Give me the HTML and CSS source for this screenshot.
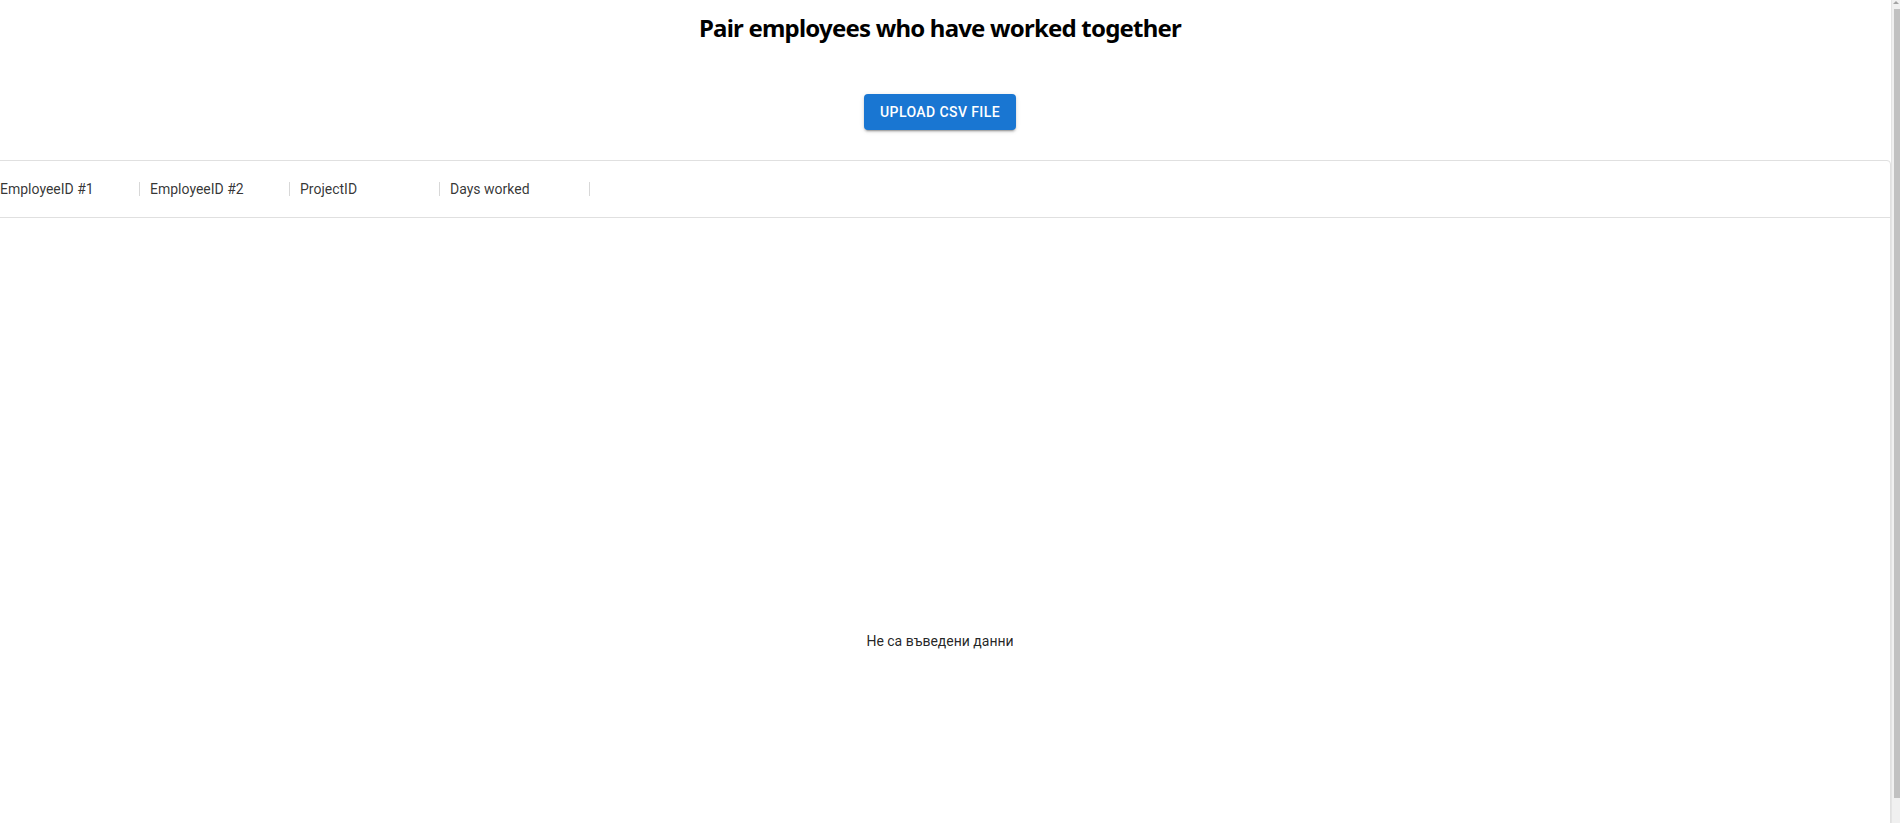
FILE: index.html
```html
<!DOCTYPE html>
<html lang="en">
<head>
<meta charset="utf-8">
<title>Pair employees</title>
<link rel="stylesheet" href="styles.css">
</head>
<body>
<div class="window">
  <div class="viewport">
    <div class="app">
      <h1 class="title">Pair employees who have worked together</h1>
      <div class="actions">
        <button class="upload" type="button">Upload CSV file</button>
      </div>
      <div class="grid">
        <div class="grid-header">
          <div class="col"><span class="col-title">EmployeeID #1</span><i class="sep"></i></div>
          <div class="col"><span class="col-title">EmployeeID #2</span><i class="sep"></i></div>
          <div class="col"><span class="col-title">ProjectID</span><i class="sep"></i></div>
          <div class="col"><span class="col-title">Days worked</span><i class="sep"></i></div>
        </div>
        <div class="grid-body">
          <span class="no-rows">Не са въведени данни</span>
        </div>
      </div>
    </div>
  </div>
  <div class="scrollbar">
    <div class="sb-arrow"><i class="sb-tri"></i></div>
    <div class="sb-thumb"></div>
    <div class="sb-rest"></div>
  </div>
</div>
</body>
</html>
```

FILE: styles.css
```css
html, body {
  margin: 0;
  padding: 0;
  background: #fff;
}

.window {
  display: flex;
  height: 100vh;
  overflow: hidden;
}

.viewport {
  flex: 1;
  min-width: 0;
  overflow: hidden;
}

.scrollbar {
  width: 9px;
  display: flex;
  flex-direction: column;
  background: #f0f0f0;
  border-left: 1px solid #e4e4e4;
  box-sizing: border-box;
}

.sb-arrow {
  height: 9px;
  display: flex;
  justify-content: flex-end;
  align-items: flex-start;
}

.sb-tri {
  width: 0;
  height: 0;
  margin: 1px 1px 0 0;
  border-left: 3px solid transparent;
  border-right: 3px solid transparent;
  border-bottom: 3px solid #a3a3a3;
}

.sb-thumb {
  height: 789px;
  margin-left: 2px;
  background: #c1c1c1;
}

.sb-rest {
  flex: 1;
}

.app {
  margin-left: -11px;
  font-family: Roboto, "Noto Sans", sans-serif;
}

.title {
  margin: 0;
  padding-top: 10px;
  height: 36px;
  line-height: 36px;
  text-align: center;
  font-family: "Noto Sans", "Open Sans", sans-serif;
  font-weight: 700;
  font-size: 24px;
  letter-spacing: -0.8px;
  color: #000;
}

.actions {
  display: flex;
  justify-content: center;
  padding: 48px 0 30px;
}

.upload {
  height: 36px;
  padding: 0 16px;
  border: 0;
  border-radius: 4px;
  background: #1976d2;
  color: #fff;
  font-family: Roboto, sans-serif;
  font-weight: 500;
  font-size: 14px;
  letter-spacing: 0.4px;
  text-transform: uppercase;
  box-shadow: 0 3px 1px -2px rgba(0,0,0,0.2), 0 2px 2px 0 rgba(0,0,0,0.14), 0 1px 5px 0 rgba(0,0,0,0.12);
  cursor: pointer;
}

.grid {
  border: 1px solid #e0e0e0;
  border-radius: 4px;
  color: rgba(0,0,0,0.87);
  font-size: 14px;
}

.grid-header {
  display: flex;
  height: 56px;
  border-bottom: 1px solid #e0e0e0;
}

.col {
  width: 150px;
  box-sizing: border-box;
  padding-left: 10px;
  display: flex;
  align-items: center;
}

.col-title {
  flex: 1;
  font-weight: 400;
  white-space: nowrap;
  color: rgba(0,0,0,0.8);
}

.sep {
  width: 1px;
  height: 14px;
  background: #d8d8d8;
}

.grid-body {
  height: 629px;
  box-sizing: border-box;
  padding-top: 413px;
  text-align: center;
  line-height: 20px;
}

.no-rows {
  color: rgba(0,0,0,0.87);
}
```
